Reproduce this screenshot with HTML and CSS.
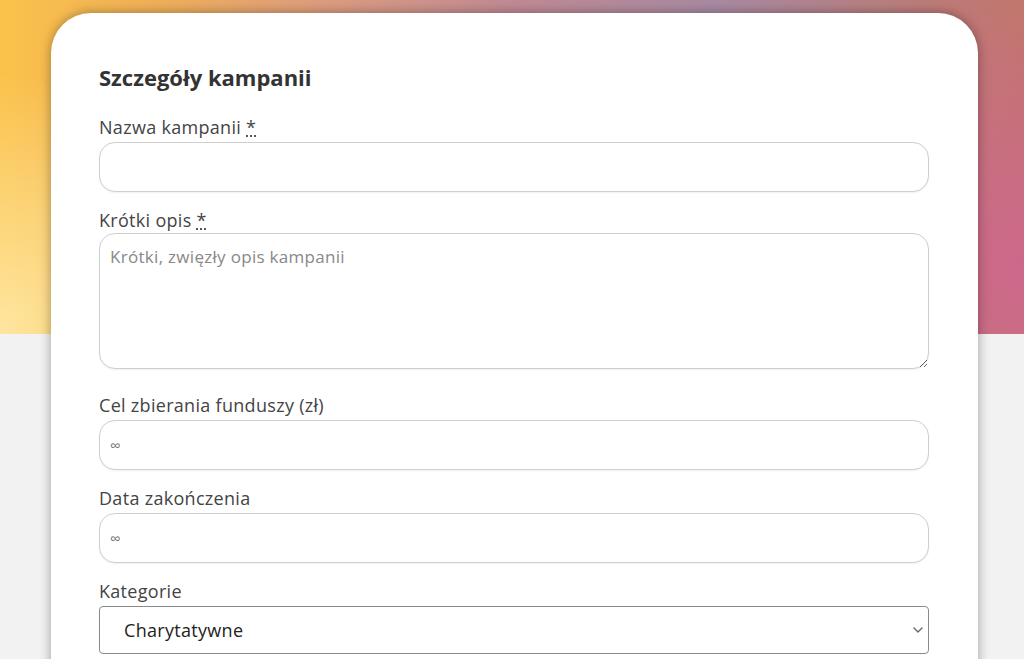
FILE: index.html
```html
<!DOCTYPE html>
<html lang="pl">
<head>
  <meta charset="UTF-8">
  <meta name="viewport" content="width=device-width, initial-scale=1.0">
  <title>Nowa kampania</title>
  <link rel="stylesheet" href="styles.css">
</head>
<body>
  <div class="hero"></div>

  <main class="page">
    <form class="card">
      <h2 class="card-title">Szczegóły kampanii</h2>

      <div class="field">
        <label for="name">Nazwa kampanii <abbr title="wymagane">*</abbr></label>
        <input class="input" id="name" type="text">
      </div>

      <div class="field field-area">
        <label for="desc">Krótki opis <abbr title="wymagane">*</abbr></label>
        <textarea class="input textarea" id="desc" placeholder="Krótki, zwięzły opis kampanii"></textarea>
      </div>

      <div class="field">
        <label for="goal">Cel zbierania funduszy (zł)</label>
        <input class="input small-ph" id="goal" type="text" placeholder="∞">
      </div>

      <div class="field">
        <label for="end">Data zakończenia</label>
        <input class="input small-ph" id="end" type="text" placeholder="∞">
      </div>

      <div class="field">
        <label for="cat">Kategorie</label>
        <div class="select-wrap">
          <select class="select" id="cat">
            <option>Charytatywne</option>
            <option>Zdrowie</option>
            <option>Edukacja</option>
          </select>
          <svg class="select-arrow" width="10" height="6" viewBox="0 0 10 6">
            <path d="M1 1l4 4 4-4" fill="none" stroke="#666" stroke-width="1.4" stroke-linecap="round" stroke-linejoin="round"/>
          </svg>
        </div>
      </div>
    </form>
  </main>
</body>
</html>
```

FILE: styles.css
```css
/* General reset */
* {
  margin: 0;
  padding: 0;
  box-sizing: border-box;
}

body {
  font-family: "Open Sans", "Lato", Arial, sans-serif;
  background-color: #f2f2f2;
  color: #333;
  min-height: 100vh;
  overflow: hidden;
  position: relative;
}

/* Coloured band behind the top of the card */
.hero {
  position: absolute;
  top: 0;
  left: 0;
  right: 0;
  height: 334px;
  background:
    radial-gradient(ellipse 220px 260px at 0% 100%, rgba(254, 230, 160, 1) 0%, rgba(254, 230, 160, 0) 100%),
    radial-gradient(ellipse 260px 300px at 100% 80%, rgba(206, 104, 140, 1) 0%, rgba(206, 104, 140, 0) 100%),
    linear-gradient(to right, #fbc24a 0%, #f0b058 15%, #dc9c80 32%, #c08a94 50%, #a88aa2 70%, #b97e7c 88%, #c07868 100%);
}

.page {
  position: relative;
  padding: 13px 46px 0 51px;
}

.card {
  background: #fff;
  border-radius: 40px 40px 0 0;
  box-shadow: 0 0 12px rgba(0, 0, 0, 0.35);
  padding: 50px 49px 48px 48px;
  min-height: 700px;
}

.card-title {
  font-size: 22px;
  font-weight: 700;
  color: #333;
  line-height: 28px;
  margin-bottom: 24px;
}

.field {
  margin-bottom: 16px;
}

.field-area {
  margin-bottom: 24px;
}

.field label {
  display: block;
  font-size: 18px;
  line-height: 24px;
  letter-spacing: 0.3px;
  color: #444;
  margin-bottom: 3px;
}

.field-area label {
  margin-bottom: 1px;
}

.field abbr {
  text-decoration: underline dotted;
  text-underline-offset: 2px;
}

.input {
  display: block;
  width: 100%;
  height: 50px;
  border: 1px solid #cfcfcf;
  border-radius: 16px;
  background: #fff;
  box-shadow: 0 1px 2px rgba(0, 0, 0, 0.06);
  padding: 0 10px;
  font-family: inherit;
  font-size: 16px;
  color: #333;
  outline: none;
}

.small-ph::placeholder {
  font-size: 15px;
  color: #777;
}

.textarea {
  height: 136px;
  padding: 11px 10px;
  font-size: 17px;
  letter-spacing: 0.3px;
  line-height: 24px;
  resize: vertical;
}

.textarea::placeholder {
  color: #888;
}

.select-wrap {
  position: relative;
}

.select {
  display: block;
  width: 100%;
  height: 48px;
  appearance: none;
  -webkit-appearance: none;
  border: 1px solid #8a8a8a;
  border-radius: 4px;
  background: #fff;
  padding: 0 24px;
  font-family: inherit;
  font-size: 18px;
  letter-spacing: 0.3px;
  color: #222;
}

.select-arrow {
  position: absolute;
  right: 6px;
  top: 21px;
  pointer-events: none;
}
```
